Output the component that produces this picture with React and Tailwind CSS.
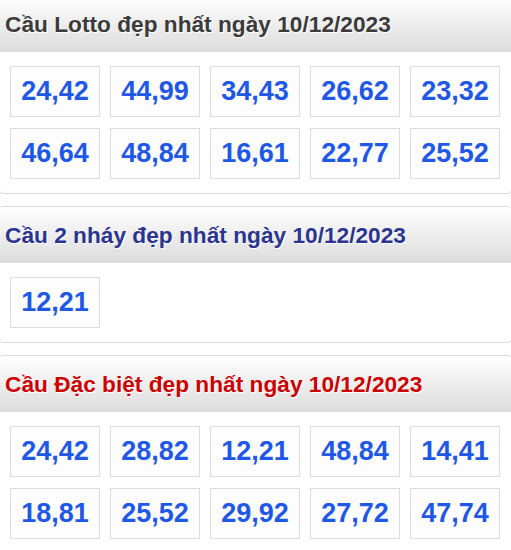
const sections = [
  {
    title: "Cầu Lotto đẹp nhất ngày 10/12/2023",
    color: "text-[#3b3b3b]",
    nums: ["24,42", "44,99", "34,43", "26,62", "23,32", "46,64", "48,84", "16,61", "22,77", "25,52"],
  },
  {
    title: "Cầu 2 nháy đẹp nhất ngày 10/12/2023",
    color: "text-[#2b3590]",
    nums: ["12,21"],
  },
  {
    title: "Cầu Đặc biệt đẹp nhất ngày 10/12/2023",
    color: "text-[#cc0000]",
    nums: ["24,42", "28,82", "12,21", "48,84", "14,41", "18,81", "25,52", "29,92", "27,72", "47,74"],
  },
];

export default function App() {
  return (
    <div className="w-[511px] h-[550px] overflow-hidden bg-white" style={{ fontFamily: '"Liberation Sans", Arial, sans-serif' }}>
      <div className="-mt-[5px] -mx-[1px] flex flex-col gap-[12px]">
        {sections.map((s, i) => (
          <div key={i} className="border border-[#dcdcdc] rounded-[4px] overflow-hidden">
            <div className="h-[56px] flex items-center pl-[5px] bg-gradient-to-b from-white to-[#dcdcdc]">
              <h2 className={`text-[22.7px] font-bold leading-none ${s.color} [text-shadow:1px_1px_0_#fff]`}>
                {s.title}
              </h2>
            </div>
            <div className="pl-[10px] pt-[14px] pb-[14px] grid grid-cols-[repeat(5,90px)] gap-x-[10px] gap-y-[11px]">
              {s.nums.map((n, j) => (
                <div key={j} className="h-[51px] border border-[#dcdcdc] bg-[#fdfdfd] flex items-center justify-center">
                  <span className="text-[27px] font-bold text-[#1f57e7] leading-none -mt-[1px]">{n}</span>
                </div>
              ))}
            </div>
          </div>
        ))}
      </div>
    </div>
  );
}
